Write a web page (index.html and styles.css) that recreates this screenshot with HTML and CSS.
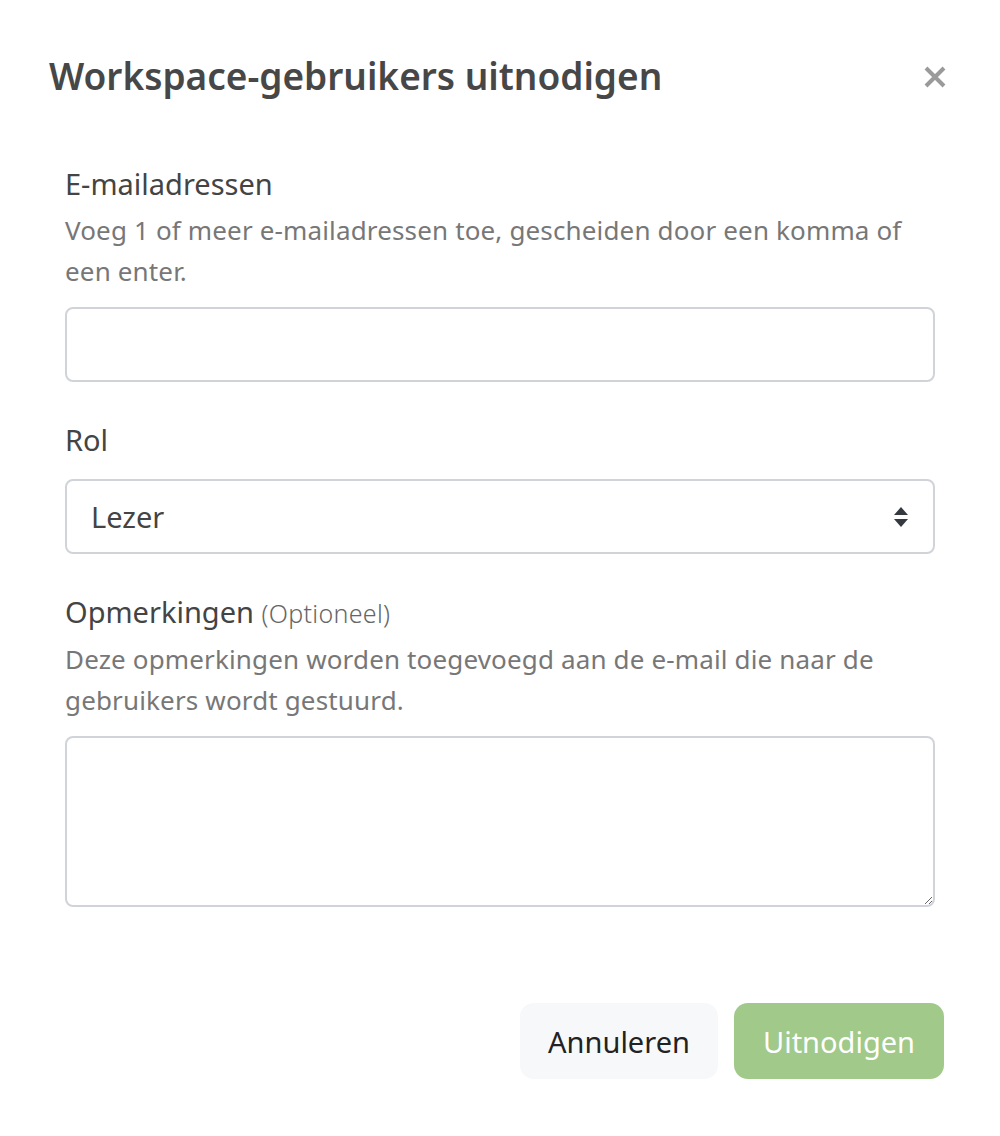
FILE: index.html
```html
<!DOCTYPE html>
<html lang="nl">
<head>
  <meta charset="UTF-8">
  <title>Workspace-gebruikers uitnodigen</title>
  <link rel="stylesheet" href="styles.css">
</head>
<body>
  <div class="modal">
    <div class="modal-header">
      <h5 class="modal-title">Workspace-gebruikers uitnodigen</h5>
      <button type="button" class="btn-close" aria-label="Sluiten">
        <svg width="24" height="24" viewBox="0 0 24 24">
          <path d="M3 3 L21 21 M21 3 L3 21" stroke="currentColor" stroke-width="4" stroke-linecap="butt"/>
        </svg>
      </button>
    </div>

    <form class="modal-body" id="inviteForm">
      <div class="field">
        <label for="emails">E-mailadressen</label>
        <p class="help">Voeg 1 of meer e-mailadressen toe, gescheiden door een komma of een enter.</p>
        <input type="text" id="emails" class="form-control">
      </div>

      <div class="field">
        <label for="role">Rol</label>
        <select id="role" class="form-select">
          <option value="reader">Lezer</option>
          <option value="editor">Bewerker</option>
          <option value="admin">Beheerder</option>
        </select>
      </div>

      <div class="field">
        <label for="notes">Opmerkingen <span class="optional">(Optioneel)</span></label>
        <p class="help">Deze opmerkingen worden toegevoegd aan de e-mail die naar de gebruikers wordt gestuurd.</p>
        <textarea id="notes" class="form-control" rows="3"></textarea>
      </div>
    </form>

    <div class="modal-footer">
      <button type="button" class="btn btn-light">Annuleren</button>
      <button type="submit" form="inviteForm" class="btn btn-primary" disabled>Uitnodigen</button>
    </div>
  </div>
</body>
</html>
```

FILE: styles.css
```css
body {
  margin: 0;
  background-color: #ffffff;
  font-family: 'Noto Sans', 'Open Sans', sans-serif;
  color: #444;
}
.modal {
  width: 1000px;
}
.modal-header {
  display: flex;
  align-items: center;
  justify-content: space-between;
  padding: 47px 53px 0 49px;
  height: 56px;
}
.modal-title {
  margin: 0;
  font-size: 37px;
  font-weight: 600;
  color: #474747;
}
.btn-close {
  border: none;
  background: none;
  padding: 4px 0 0 0;
  color: #9a9a9a;
  cursor: pointer;
  display: flex;
}
.modal-body {
  padding: 59px 65px 0 65px;
  display: flex;
  flex-direction: column;
  gap: 36px;
}
.field {
  display: flex;
  flex-direction: column;
}
label {
  font-size: 29px;
  line-height: 44px;
  color: #444;
  margin-bottom: 4px;
}
.optional {
  font-size: 25px;
  font-weight: 300;
  color: #666;
  letter-spacing: 0.3px;
}
.help {
  margin: 0 0 15px 0;
  font-size: 26px;
  line-height: 41px;
  color: #777;
  letter-spacing: 0.15px;
}
.form-control, .form-select {
  font-family: inherit;
  font-size: 29px;
  border: 2px solid #d0d4d9;
  border-radius: 8px;
  background-color: #fff;
  color: #444;
  box-sizing: border-box;
  outline: none;
}
.form-control {
  height: 75px;
  padding: 0 24px;
}
#role {
  margin-top: 13px;
}
.form-select {
  height: 75px;
  padding: 0 60px 0 24px;
  appearance: none;
  background-image: url("data:image/svg+xml,%3Csvg xmlns='http://www.w3.org/2000/svg' width='16' height='24' viewBox='0 0 16 24'%3E%3Cpath d='M8 2 L15 10 H1 Z M8 22 L15 14 H1 Z' fill='%23343a40'/%3E%3C/svg%3E");
  background-repeat: no-repeat;
  background-position: right 24px center;
  background-size: 16px 24px;
}
textarea.form-control {
  height: 171px;
  padding: 14px 24px;
  resize: vertical;
}
.modal-footer {
  display: flex;
  justify-content: flex-end;
  gap: 16px;
  padding: 96px 56px 0 0;
}
.btn {
  font-family: inherit;
  font-size: 29px;
  height: 76px;
  padding: 0 26px;
  border: none;
  border-radius: 14px;
  cursor: pointer;
}
.btn-light {
  background-color: #f7f8fa;
  color: #222;
  width: 198px;
}
.btn-primary {
  background-color: #a1c98a;
  color: #fff;
  width: 210px;
}
.btn-primary:disabled {
  cursor: default;
}
```
